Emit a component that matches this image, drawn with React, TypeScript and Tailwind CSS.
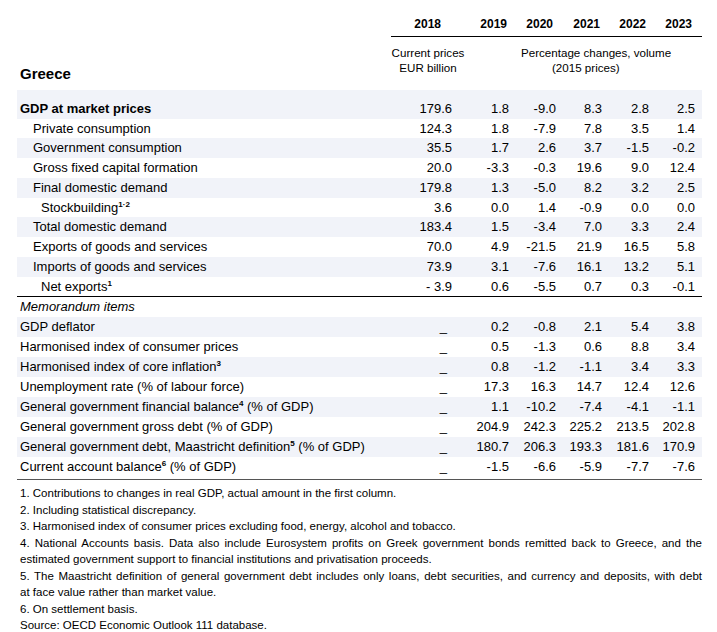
type Row = {
  label: string
  sup?: string
  indent?: 0 | 1 | 2
  bold?: boolean
  values: string[]
  band?: boolean
}

const mainRows: Row[] = [
  { label: 'Private consumption', indent: 1, values: ['124.3', '1.8', '-7.9', '7.8', '3.5', '1.4'] },
  { label: 'Government consumption', indent: 1, band: true, values: ['35.5', '1.7', '2.6', '3.7', '-1.5', '-0.2'] },
  { label: 'Gross fixed capital formation', indent: 1, values: ['20.0', '-3.3', '-0.3', '19.6', '9.0', '12.4'] },
  { label: 'Final domestic demand', indent: 1, band: true, values: ['179.8', '1.3', '-5.0', '8.2', '3.2', '2.5'] },
  { label: 'Stockbuilding', sup: '1·2', indent: 2, values: ['3.6', '0.0', '1.4', '-0.9', '0.0', '0.0'] },
  { label: 'Total domestic demand', indent: 1, band: true, values: ['183.4', '1.5', '-3.4', '7.0', '3.3', '2.4'] },
  { label: 'Exports of goods and services', indent: 1, values: ['70.0', '4.9', '-21.5', '21.9', '16.5', '5.8'] },
  { label: 'Imports of goods and services', indent: 1, band: true, values: ['73.9', '3.1', '-7.6', '16.1', '13.2', '5.1'] },
  { label: 'Net exports', sup: '1', indent: 2, values: ['- 3.9', '0.6', '-5.5', '0.7', '0.3', '-0.1'] },
]

const memoRows: Row[] = [
  { label: 'GDP deflator', band: true, values: ['_', '0.2', '-0.8', '2.1', '5.4', '3.8'] },
  { label: 'Harmonised index of consumer prices', values: ['_', '0.5', '-1.3', '0.6', '8.8', '3.4'] },
  { label: 'Harmonised index of core inflation', sup: '3', band: true, values: ['_', '0.8', '-1.2', '-1.1', '3.4', '3.3'] },
  { label: 'Unemployment rate (% of labour force)', values: ['_', '17.3', '16.3', '14.7', '12.4', '12.6'] },
  { label: 'General government financial balance', sup: '4', band: true, values: ['_', '1.1', '-10.2', '-7.4', '-4.1', '-1.1'] },
  { label: 'General government gross debt (% of GDP)', values: ['_', '204.9', '242.3', '225.2', '213.5', '202.8'] },
  { label: 'General government debt, Maastricht definition', sup: '5', band: true, values: ['_', '180.7', '206.3', '193.3', '181.6', '170.9'] },
  { label: 'Current account balance', sup: '6', values: ['_', '-1.5', '-6.6', '-5.9', '-7.7', '-7.6'] },
]

// text that comes after the footnote mark
const suffix: Record<string, string> = {
  'General government financial balance': ' (% of GDP)',
  'General government debt, Maastricht definition': ' (% of GDP)',
  'Current account balance': ' (% of GDP)',
}

const widths = ['w-[48px]', 'w-[57px]', 'w-[47px]', 'w-[46px]', 'w-[47px]', 'w-[46px]']

function DataRow({ row, tall, h }: { row: Row; tall?: boolean; h: string }) {
  const pad = row.indent === 2 ? 'pl-[24px]' : row.indent === 1 ? 'pl-[16px]' : 'pl-[3px]'
  return (
    <div className={`flex items-end pr-[7px] ${tall ? 'h-[28.5px]' : h} ${row.band ? 'bg-[#f1f3f9]' : ''}`}>
      <div className={`flex-1 ${h} flex items-center whitespace-nowrap ${pad} ${row.bold ? 'font-bold' : ''}`}>
        <span>
          {row.label}
          {row.sup && <sup className="text-[8px] font-bold -top-[5px]">{row.sup}</sup>}
          {suffix[row.label]}
        </span>
      </div>
      {row.values.map((v, i) => (
        <div key={i} className={`${widths[i]} ${h} flex items-center justify-end ${v === '_' ? 'pr-[5px]' : ''}`}>
          {v}
        </div>
      ))}
    </div>
  )
}

const years = [
  { y: '2018', w: 'w-[61px]', p: 'pr-[11px]' },
  { y: '2019', w: 'w-[57px]', p: 'pr-[2px]' },
  { y: '2020', w: 'w-[47px]', p: 'pr-[3px]' },
  { y: '2021', w: 'w-[46px]', p: 'pr-[2px]' },
  { y: '2022', w: 'w-[47px]', p: 'pr-[3px]' },
  { y: '2023', w: 'w-[46px]', p: 'pr-[3px]' },
]

export default function App() {
  return (
    <div className="w-[717px] h-[632px] overflow-hidden bg-white text-black font-['Liberation_Sans',Arial,sans-serif] pl-[17px] pr-[15px]">
      {/* Header */}
      <div className="flex items-end h-[90px]">
        <div className="w-[374px] pl-[3px] pb-[7px] text-[15px] leading-[18px] font-bold">Greece</div>
        <div className="flex-1 pb-[15px]">
          <div className="flex h-[25px] items-center border-b border-black text-[12px] font-bold">
            {years.map((c) => (
              <div key={c.y} className={`${c.w} ${c.p} text-right`}>
                {c.y}
              </div>
            ))}
          </div>
          <div className="flex pt-[8px] text-[11.6px] leading-[15px]">
            <div className="w-[74px] text-center">
              <div>Current prices</div>
              <div>EUR billion</div>
            </div>
            <div className="flex flex-col">
              <div className="ml-[56px] whitespace-nowrap">Percentage changes, volume</div>
              <div className="ml-[87px] whitespace-nowrap">(2015 prices)</div>
            </div>
          </div>
        </div>
      </div>

      {/* Body */}
      <div className="text-[13px] leading-[19.75px]">
        <DataRow
          row={{ label: 'GDP at market prices', bold: true, band: true, values: ['179.6', '1.8', '-9.0', '8.3', '2.8', '2.5'] }}
          tall
          h="h-[19.75px]"
        />
        {mainRows.map((r) => (
          <DataRow key={r.label} row={r} h="h-[19.75px]" />
        ))}
        <div className="border-t border-black" />
        <div className="h-[20px] flex items-center pl-[3px] italic">Memorandum items</div>
        {memoRows.map((r) => (
          <DataRow key={r.label} row={r} h="h-[20px]" />
        ))}
        <div className="h-[2px]" />
        <div className="border-t border-[#555]" />
      </div>

      {/* Notes */}
      <div className="pt-[5px] pl-[3px] text-[11.5px] leading-[16.5px]">
        <p>1. Contributions to changes in real GDP, actual amount in the first column.</p>
        <p>2. Including statistical discrepancy.</p>
        <p>3. Harmonised index of consumer prices excluding food, energy, alcohol and tobacco.</p>
        <p className="whitespace-nowrap [text-align-last:justify]">
          4. National Accounts basis. Data also include Eurosystem profits on Greek government bonds remitted back to Greece, and the
        </p>
        <p>estimated government support to financial institutions and privatisation proceeds.</p>
        <p className="whitespace-nowrap [text-align-last:justify]">
          5. The Maastricht definition of general government debt includes only loans, debt securities, and currency and deposits, with debt
        </p>
        <p>at face value rather than market value.</p>
        <p>6. On settlement basis.</p>
        <p>Source: OECD Economic Outlook 111 database.</p>
      </div>
    </div>
  )
}
